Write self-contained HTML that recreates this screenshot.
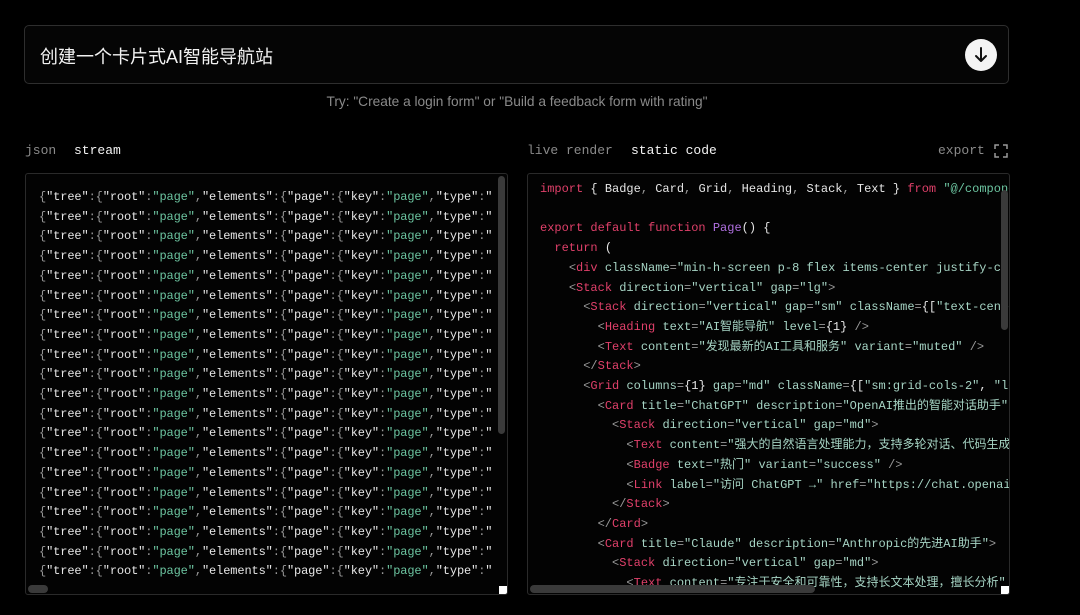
<!DOCTYPE html>
<html><head><meta charset="utf-8"><style>
*{margin:0;padding:0;box-sizing:border-box}
body{width:1080px;height:615px;background:#000;overflow:hidden;font-family:"Liberation Sans","Noto Sans CJK SC",sans-serif;color:#eee;position:relative}
.inp{position:absolute;left:24px;top:25px;width:985px;height:59px;border:1px solid #2e2e2e;border-radius:5px;background:#050505}
.inp .t{position:absolute;left:15px;top:17px;font-size:18px;color:#f2f2f2}
.btn{position:absolute;left:940px;top:13px;width:32px;height:32px;border-radius:50%;background:#f4f4f4}
.try{position:absolute;top:94px;left:0;width:1034px;text-align:center;font-size:13.7px;color:#8a8a8a}
.tab{position:absolute;top:143px;font-family:"Liberation Mono",monospace;font-size:13px}
.dim{color:#8a8a8a}.on{color:#f2f2f2}
.panel{position:absolute;top:173px;height:422px;border:1px solid #2a2a2a;border-radius:3px;background:#030303;overflow:hidden}
pre{font-family:"Liberation Mono","Noto Sans CJK SC",monospace;font-size:12px;line-height:19.7px;color:#e6e6e6;position:absolute;white-space:pre}
.s{color:#6cc4a0}.p{color:#999}.k{color:#e0406a}.a{color:#a6d4c4}.f{color:#b070e0}.g{color:#a6d4c4}
.vs{position:absolute;background:#3a3a3a;border-radius:4px;width:7px}
.hs{position:absolute;background:#3a3a3a;border-radius:4px;height:8px}
.sq{position:absolute;width:8px;height:8px;background:#fff}
</style></head><body>
<div class="inp"><div class="t">创建一个卡片式AI智能导航站</div>
<div class="btn"><svg width="32" height="32" viewBox="0 0 32 32"><path d="M16 9v13M11 17l5 5 5-5" stroke="#111" stroke-width="2" fill="none" stroke-linecap="round" stroke-linejoin="round"/></svg></div></div>
<div class="try">Try: "Create a login form" or "Build a feedback form with rating"</div>
<div class="tab dim" style="left:25px">json</div><div class="tab on" style="left:74px">stream</div>
<div class="tab dim" style="left:527px">live render</div><div class="tab on" style="left:631px">static code</div>
<div class="tab dim" style="left:938px">export</div>
<svg style="position:absolute;left:994px;top:144px" width="14" height="14" viewBox="0 0 14 14"><path d="M1 5V1h4M9 1h4v4M13 9v4H9M5 13H1V9" stroke="#999" stroke-width="1.5" fill="none"/></svg>
<div class="panel" style="left:25px;width:483px">
<pre style="left:13px;top:14px;font-size:12px;letter-spacing:-0.12px" id="L"></pre>
<div class="vs" style="left:472px;top:2px;height:258px"></div>
<div class="hs" style="left:2px;top:411px;width:20px"></div>
<div class="sq" style="left:473px;top:412px"></div>
</div>
<div class="panel" style="left:527px;width:483px">
<pre style="left:12px;top:6px"><span class="k">import</span> { Badge<span class="p">,</span> Card<span class="p">,</span> Grid<span class="p">,</span> Heading<span class="p">,</span> Stack<span class="p">,</span> Text } <span class="k">from</span> <span class="s">"@/components"</span>

<span class="k">export default function</span> <span class="f">Page</span>() {
  <span class="k">return</span> (
    <span class="p">&lt;</span><span class="k">div</span> <span class="a">className</span><span class="p">=</span><span class="g">"min-h-screen p-8 flex items-center justify-center"</span>
    <span class="p">&lt;</span><span class="k">Stack</span> <span class="a">direction</span><span class="p">=</span><span class="g">"vertical"</span> <span class="a">gap</span><span class="p">=</span><span class="g">"lg"</span><span class="p">&gt;</span>
      <span class="p">&lt;</span><span class="k">Stack</span> <span class="a">direction</span><span class="p">=</span><span class="g">"vertical"</span> <span class="a">gap</span><span class="p">=</span><span class="g">"sm"</span> <span class="a">className</span><span class="p">=</span>{[<span class="g">"text-center"</span>
        <span class="p">&lt;</span><span class="k">Heading</span> <span class="a">text</span><span class="p">=</span><span class="g">"AI智能导航"</span> <span class="a">level</span><span class="p">=</span>{1} <span class="p">/&gt;</span>
        <span class="p">&lt;</span><span class="k">Text</span> <span class="a">content</span><span class="p">=</span><span class="g">"发现最新的AI工具和服务"</span> <span class="a">variant</span><span class="p">=</span><span class="g">"muted"</span> <span class="p">/&gt;</span>
      <span class="p">&lt;/</span><span class="k">Stack</span><span class="p">&gt;</span>
      <span class="p">&lt;</span><span class="k">Grid</span> <span class="a">columns</span><span class="p">=</span>{1} <span class="a">gap</span><span class="p">=</span><span class="g">"md"</span> <span class="a">className</span><span class="p">=</span>{[<span class="g">"sm:grid-cols-2"</span>, <span class="g">"lg"</span>
        <span class="p">&lt;</span><span class="k">Card</span> <span class="a">title</span><span class="p">=</span><span class="g">"ChatGPT"</span> <span class="a">description</span><span class="p">=</span><span class="g">"OpenAI推出的智能对话助手"</span>
          <span class="p">&lt;</span><span class="k">Stack</span> <span class="a">direction</span><span class="p">=</span><span class="g">"vertical"</span> <span class="a">gap</span><span class="p">=</span><span class="g">"md"</span><span class="p">&gt;</span>
            <span class="p">&lt;</span><span class="k">Text</span> <span class="a">content</span><span class="p">=</span><span class="g">"强大的自然语言处理能力，支持多轮对话、代码生成"</span>
            <span class="p">&lt;</span><span class="k">Badge</span> <span class="a">text</span><span class="p">=</span><span class="g">"热门"</span> <span class="a">variant</span><span class="p">=</span><span class="g">"success"</span> <span class="p">/&gt;</span>
            <span class="p">&lt;</span><span class="k">Link</span> <span class="a">label</span><span class="p">=</span><span class="g">"访问 ChatGPT →"</span> <span class="a">href</span><span class="p">=</span><span class="g">"https://chat.openai.com"</span>
          <span class="p">&lt;/</span><span class="k">Stack</span><span class="p">&gt;</span>
        <span class="p">&lt;/</span><span class="k">Card</span><span class="p">&gt;</span>
        <span class="p">&lt;</span><span class="k">Card</span> <span class="a">title</span><span class="p">=</span><span class="g">"Claude"</span> <span class="a">description</span><span class="p">=</span><span class="g">"Anthropic的先进AI助手"</span><span class="p">&gt;</span>
          <span class="p">&lt;</span><span class="k">Stack</span> <span class="a">direction</span><span class="p">=</span><span class="g">"vertical"</span> <span class="a">gap</span><span class="p">=</span><span class="g">"md"</span><span class="p">&gt;</span>
            <span class="p">&lt;</span><span class="k">Text</span> <span class="a">content</span><span class="p">=</span><span class="g">"专注于安全和可靠性，支持长文本处理，擅长分析"</span></pre>
<div class="vs" style="left:473px;top:16px;height:140px"></div>
<div class="hs" style="left:2px;top:411px;width:285px"></div>
<div class="sq" style="left:473px;top:412px"></div>
</div>
<script>
var l='<span class="p">{</span>"tree"<span class="p">:{</span>"root"<span class="p">:</span><span class="s">"page"</span><span class="p">,</span>"elements"<span class="p">:{</span>"page"<span class="p">:{</span>"key"<span class="p">:</span><span class="s">"page"</span><span class="p">,</span>"type"<span class="p">:</span>"';
document.getElementById('L').innerHTML=Array(20).fill(l).join('\n');
</script>
</body></html>
